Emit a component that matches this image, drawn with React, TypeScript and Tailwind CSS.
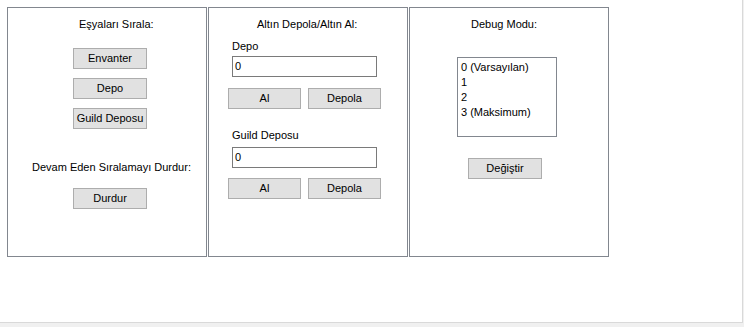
import React from "react";

const font = { fontFamily: '"Liberation Sans", Arial, sans-serif' };

function Btn({ label, w = "w-[74px]" }: { label: string; w?: string }) {
  return (
    <button
      className={`${w} h-[21px] bg-[#e1e1e1] border border-[#adadad] text-[11px] leading-none text-black flex items-center justify-center whitespace-nowrap`}
    >
      {label}
    </button>
  );
}

function Input() {
  return (
    <div className="w-[145px] h-[21px] border border-[#7a7a7a] bg-white text-[11px] leading-none flex items-center pl-[2px] text-black">
      0
    </div>
  );
}

const txt = "text-[11px] leading-[14px] text-black whitespace-nowrap";

export default function App() {
  return (
    <div className="w-[744px] h-[327px] bg-[#f0f0f0]" style={font}>
      <div className="w-[743px] h-[323px] bg-white border-r border-b border-[#d9d9d9] pt-[7px] pl-[7px]">
        <div className="flex gap-[1px]">
          {/* Panel 1 */}
          <div className="w-[200px] h-[250px] border border-[#82878f] flex flex-col items-start">
            <div className={`mt-[9px] ml-[71px] ${txt}`}>Eşyaları Sırala:</div>
            <div className="mt-[17px] ml-[65px] flex flex-col gap-[9px]">
              <Btn label="Envanter" />
              <Btn label="Depo" />
              <Btn label="Guild Deposu" />
            </div>
            <div className={`mt-[31px] ml-[24px] ${txt}`}>Devam Eden Sıralamayı Durdur:</div>
            <div className="mt-[14px] ml-[65px]">
              <Btn label="Durdur" />
            </div>
          </div>
          {/* Panel 2 */}
          <div className="w-[200px] h-[250px] border border-[#82878f] flex flex-col items-start">
            <div className={`mt-[9px] ml-[48px] ${txt}`}>Altın Depola/Altın Al:</div>
            <div className={`mt-[8px] ml-[23px] ${txt}`}>Depo</div>
            <div className="mt-[3px] ml-[23px]">
              <Input />
            </div>
            <div className="mt-[11px] ml-[19px] flex gap-[7px]">
              <Btn label="Al" w="w-[73px]" />
              <Btn label="Depola" w="w-[73px]" />
            </div>
            <div className={`mt-[19px] ml-[23px] ${txt}`}>Guild Deposu</div>
            <div className="mt-[5px] ml-[23px]">
              <Input />
            </div>
            <div className="mt-[10px] ml-[19px] flex gap-[7px]">
              <Btn label="Al" w="w-[73px]" />
              <Btn label="Depola" w="w-[73px]" />
            </div>
          </div>
          {/* Panel 3 */}
          <div className="w-[200px] h-[250px] border border-[#82878f] flex flex-col items-start">
            <div className={`mt-[9px] ml-[61px] ${txt}`}>Debug Modu:</div>
            <div className="mt-[26px] ml-[47px] w-[100px] h-[80px] border border-[#82878f] bg-white pl-[3px] pt-[2px] text-[11px] leading-[15px] text-black whitespace-nowrap">
              <div>0 (Varsayılan)</div>
              <div>1</div>
              <div>2</div>
              <div>3 (Maksimum)</div>
            </div>
            <div className="mt-[21px] ml-[58px]">
              <Btn label="Değiştir" />
            </div>
          </div>
        </div>
      </div>
    </div>
  );
}
